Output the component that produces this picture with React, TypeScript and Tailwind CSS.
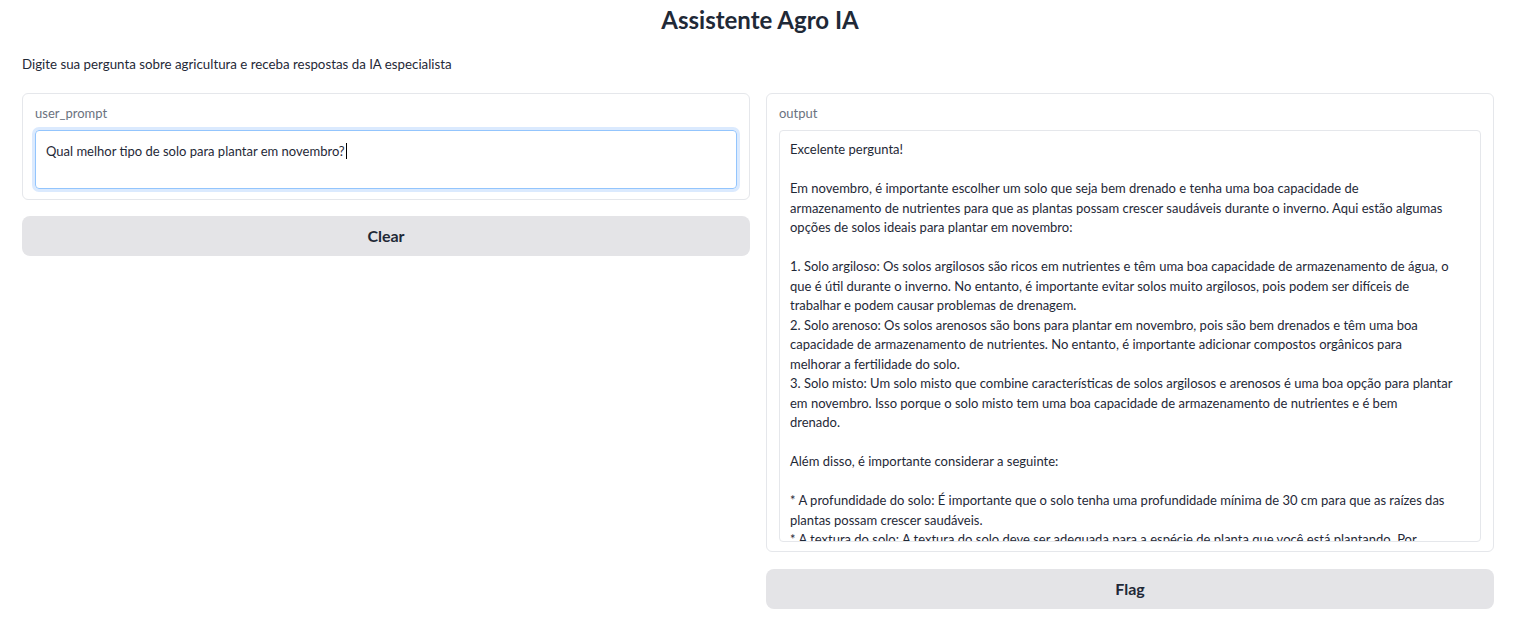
import React from 'react';

const font = { fontFamily: 'Lato, "Noto Sans", sans-serif' };

const outputLines: string[] = [
    'Excelente pergunta!',
    '',
    'Em novembro, é importante escolher um solo que seja bem drenado e tenha uma boa capacidade de',
    'armazenamento de nutrientes para que as plantas possam crescer saudáveis durante o inverno. Aqui estão algumas',
    'opções de solos ideais para plantar em novembro:',
    '',
    '1. Solo argiloso: Os solos argilosos são ricos em nutrientes e têm uma boa capacidade de armazenamento de água, o',
    'que é útil durante o inverno. No entanto, é importante evitar solos muito argilosos, pois podem ser difíceis de',
    'trabalhar e podem causar problemas de drenagem.',
    '2. Solo arenoso: Os solos arenosos são bons para plantar em novembro, pois são bem drenados e têm uma boa',
    'capacidade de armazenamento de nutrientes. No entanto, é importante adicionar compostos orgânicos para',
    'melhorar a fertilidade do solo.',
    '3. Solo misto: Um solo misto que combine características de solos argilosos e arenosos é uma boa opção para plantar',
    'em novembro. Isso porque o solo misto tem uma boa capacidade de armazenamento de nutrientes e é bem',
    'drenado.',
    '',
    'Além disso, é importante considerar a seguinte:',
    '',
    '* A profundidade do solo: É importante que o solo tenha uma profundidade mínima de 30 cm para que as raízes das',
    'plantas possam crescer saudáveis.',
    '* A textura do solo: A textura do solo deve ser adequada para a espécie de planta que você está plantando. Por',
];

const Button: React.FC<{ label: string }> = ({ label }) => (
    <button className="h-10 w-full rounded-lg bg-[#e4e4e7] text-[16px] font-bold text-[#1f2937]">
        {label}
    </button>
);

export default function App() {
    return (
        <div
            className="min-h-[636px] w-[1520px] bg-white text-[#1f2937]"
            style={font}
        >
            <h1 className="pt-[5px] text-center text-[24px] font-bold leading-[30px] text-[#1f2937]">
                Assistente Agro IA
            </h1>
            <p className="mt-[19px] pl-[22px] text-[13.3px] leading-[20px]">
                Digite sua pergunta sobre agricultura e receba respostas da IA especialista
            </p>

            <div className="mt-[19px] flex gap-[16px] pl-[22px]">
                {/* input column */}
                <div className="flex w-[728px] flex-col gap-[16px]">
                    <div className="rounded-md border border-[#e5e7eb] px-[12px] pb-[10px] pt-[10px]">
                        <div className="mb-[8px] text-[13px] leading-[18px] text-[#6b7280]">
                            user_prompt
                        </div>
                        <div className="h-[59px] rounded-[4px] border border-[#93c5fd] px-[10px] pt-[9px] text-[13px] leading-[20px] ring-[3px] ring-[#dbeafe]">
                            Qual melhor tipo de solo para plantar em novembro?
                            <span className="ml-px inline-block h-[16px] w-px translate-y-[3px] bg-black" />
                        </div>
                    </div>
                    <Button label="Clear" />
                </div>

                {/* output column */}
                <div className="flex w-[728px] flex-col gap-[17px]">
                    <div className="rounded-md border border-[#e5e7eb] px-[12px] pb-[9px] pt-[10px]">
                        <div className="mb-[8px] text-[13px] leading-[18px] text-[#6b7280]">
                            output
                        </div>
                        <div className="h-[412px] overflow-hidden rounded-[4px] border border-[#e5e7eb] px-[10px] pt-[9px] text-[13px] leading-[19.5px]">
                            {outputLines.map((line, i) => (
                                <div key={i} className="h-[19.5px] whitespace-nowrap">
                                    {line}
                                </div>
                            ))}
                        </div>
                    </div>
                    <Button label="Flag" />
                </div>
            </div>
        </div>
    );
}
